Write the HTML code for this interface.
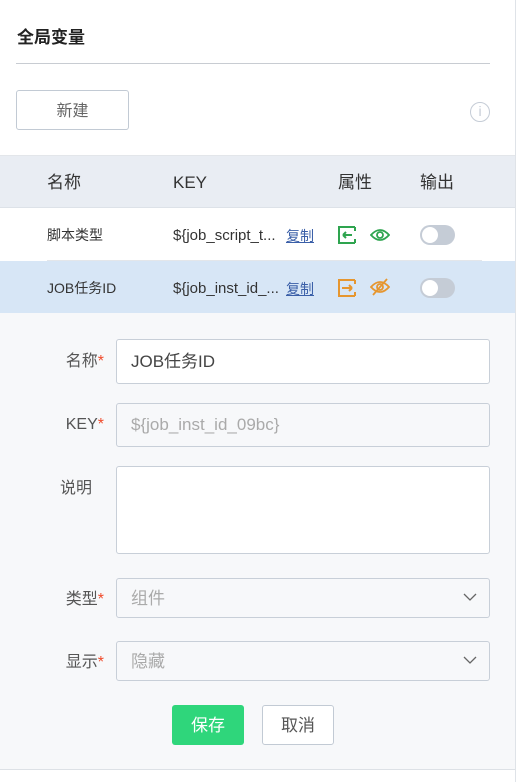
<!DOCTYPE html>
<html><head><meta charset="utf-8"><style>
*{box-sizing:border-box;margin:0;padding:0}
body{width:516px;height:782px;background:#fff;font-family:"Liberation Sans","Noto Sans CJK SC",sans-serif;position:relative;overflow:hidden;color:#333}
.a{position:absolute;line-height:24px;height:24px;white-space:nowrap}
svg.s{position:absolute}
.inp{position:absolute;left:116px;width:374px;border:1px solid #c8cfd8;border-radius:3px;background:#fff;font-size:17px;padding-left:14px;white-space:nowrap}
.lbl{position:absolute;font-size:16px;color:#555;text-align:right;width:104px;left:0;line-height:24px;height:24px}
.lbl b{color:#f04a2a;font-weight:normal}
.tog{position:absolute;left:420px;width:35px;height:20px;border-radius:10px;background:#c5ccd6}
.tog:after{content:"";position:absolute;left:2px;top:2px;width:16px;height:16px;border-radius:50%;background:#fff}
.cp{position:absolute;left:286px;font-size:14px;color:#3a5fa8;text-decoration:underline;line-height:24px;height:24px}
</style></head><body>
<div class="a" style="right:0;top:0;width:1px;height:782px;background:#dfe3e8"></div>
<div class="a" style="left:17px;top:26px;font-size:17px;font-weight:bold;color:#222">全局变量</div>
<div class="a" style="left:16px;top:63px;width:474px;height:1px;background:#c8ccd2"></div>
<div class="a" style="left:16px;top:90px;width:113px;height:40px;border:1px solid #c2cad4;border-radius:3px;font-size:16px;color:#666;text-align:center;line-height:42px">新建</div>
<div class="a" style="left:470px;top:102px;width:20px;height:20px;border:1.5px solid #c5ccd6;border-radius:50%;color:#c5ccd6;font-size:14px;text-align:center;line-height:17px">i</div>
<div class="a" style="left:0;top:155px;width:515px;height:1px;background:#e3e6ea"></div>
<div class="a" style="left:0;top:156px;width:515px;height:52px;background:#e9edf3;border-bottom:1px solid #dde2e8"></div>
<div class="a" style="left:47px;top:171px;font-size:17px;color:#333">名称</div>
<div class="a" style="left:173px;top:171px;font-size:17px;color:#333">KEY</div>
<div class="a" style="left:338px;top:171px;font-size:17px;color:#333">属性</div>
<div class="a" style="left:420px;top:171px;font-size:17px;color:#333">输出</div>
<div class="a" style="left:47px;top:223px;font-size:14px">脚本类型</div>
<div class="a" style="left:173px;top:224px;font-size:15px">${job_script_t...</div>
<div class="cp" style="top:224px">复制</div>
<svg class="s" style="left:337px;top:225px;width:20px;height:20px" viewBox="0 0 20 20"><path d="M18 2H2v16h16M18 2v4M18 18v-4M6 10h9M6 10l3-3M6 10l3 3" fill="none" stroke="#2ea44f" stroke-width="2"/></svg>
<svg class="s" style="left:370px;top:227px;width:20px;height:16px" viewBox="0 0 20 16"><path d="M1 8Q10-2 19 8Q10 18 1 8Z" fill="none" stroke="#2ea44f" stroke-width="1.8"/><circle cx="10" cy="8" r="3" fill="none" stroke="#2ea44f" stroke-width="1.8"/></svg>
<div class="tog" style="top:225px"></div>
<div class="a" style="left:47px;top:260px;width:435px;height:1px;background:#e3e6ea"></div>
<div class="a" style="left:0;top:261px;width:515px;height:52px;background:#d7e6f6"></div>
<div class="a" style="left:47px;top:276px;font-size:14px">JOB任务ID</div>
<div class="a" style="left:173px;top:277px;font-size:15px">${job_inst_id_...</div>
<div class="cp" style="top:277px">复制</div>
<svg class="s" style="left:337px;top:278px;width:20px;height:20px" viewBox="0 0 20 20"><path d="M18 2H2v16h16M18 2v4M18 18v-4M5 10h10M15 10l-3-3M15 10l-3 3" fill="none" stroke="#e6962f" stroke-width="2"/></svg>
<svg class="s" style="left:370px;top:278px;width:20px;height:18px" viewBox="0 0 20 18"><path d="M1 9Q10-1 19 9Q10 19 1 9Z" fill="none" stroke="#e6962f" stroke-width="1.8"/><circle cx="10" cy="9" r="3" fill="none" stroke="#e6962f" stroke-width="1.8"/><path d="M3 17L17 1" stroke="#e6962f" stroke-width="1.8"/></svg>
<div class="tog" style="top:278px"></div>
<div class="a" style="left:0;top:313px;width:515px;height:457px;background:#f7f8fa;border-bottom:1px solid #dde1e6"></div>
<div class="lbl" style="top:350px">名称<b>*</b></div>
<div class="inp" style="top:339px;height:45px;line-height:43px;color:#444">JOB任务ID</div>
<div class="lbl" style="top:413px">KEY<b>*</b></div>
<div class="inp" style="top:403px;height:44px;line-height:42px;color:#aaa;background:#f7f8fa">${job_inst_id_09bc}</div>
<div class="lbl" style="top:477px;width:92px">说明</div>
<div class="inp" style="top:466px;height:88px"></div>
<div class="lbl" style="top:588px">类型<b>*</b></div>
<div class="inp" style="top:578px;height:40px;line-height:40px;color:#aaa;background:#f7f8fa">组件</div>
<div class="lbl" style="top:651px">显示<b>*</b></div>
<div class="inp" style="top:641px;height:40px;line-height:40px;color:#aaa;background:#f7f8fa">隐藏</div>
<svg class="s" style="left:463px;top:593px;width:14px;height:9px"><path d="M1 1l6 6 6-6" fill="none" stroke="#666" stroke-width="1.3"/></svg>
<svg class="s" style="left:463px;top:656px;width:14px;height:9px"><path d="M1 1l6 6 6-6" fill="none" stroke="#666" stroke-width="1.3"/></svg>
<div class="a" style="left:172px;top:705px;width:72px;height:40px;background:#2fd67b;border-radius:3px;color:#fff;font-size:17px;text-align:center;line-height:42px">保存</div>
<div class="a" style="left:262px;top:705px;width:72px;height:40px;border:1px solid #c2cad4;border-radius:3px;background:#fff;color:#555;font-size:17px;text-align:center;line-height:40px">取消</div>
</body></html>
